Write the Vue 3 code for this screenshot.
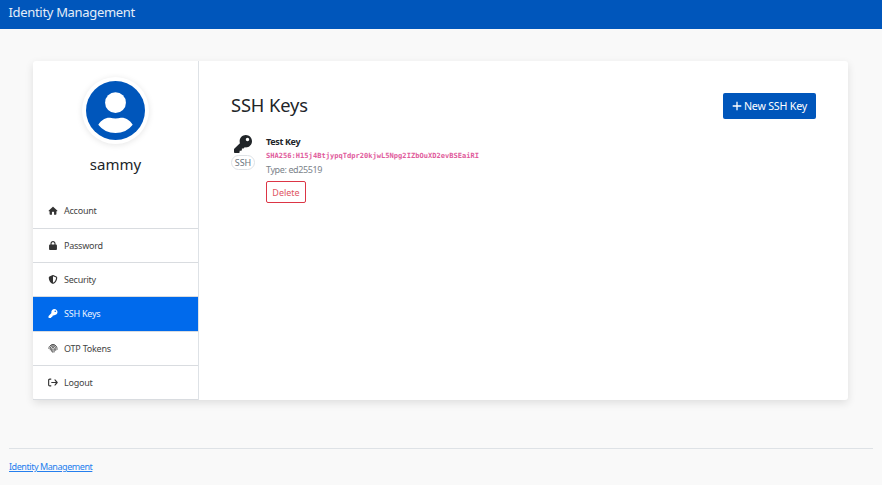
<script setup>
const items = [
  { name: 'Account', icon: 'home' },
  { name: 'Password', icon: 'lock' },
  { name: 'Security', icon: 'shield' },
  { name: 'SSH Keys', icon: 'key', active: true },
  { name: 'OTP Tokens', icon: 'fingerprint' },
  { name: 'Logout', icon: 'logout' },
]
const keyPath = 'M512 176C512 273.200 433.200 352 336 352c-11.220 0-22.190-1.062-32.827-3.069l-24.012 27.014A24 24 0 0 1 261.223 384H224v40c0 13.255-10.745 24-24 24h-40v40c0 13.255-10.745 24-24 24H24c-13.255 0-24-10.745-24-24v-78.059c0-6.365 2.529-12.470 7.029-16.971l161.802-161.802C163.108 213.814 160 195.271 160 176 160 78.800 238.800 0 336 0 433.500 0 512 78.500 512 176zM336 128c0 26.510 21.490 48 48 48s48-21.490 48-48-21.490-48-48-48-48 21.490-48 48z'
const icons = {
  home: 'M280 42c14-13 34-13 48 0l232 208c24 22 9 54-18 54h-30v148c0 33-22 60-56 60H368V368c0-18-14-32-32-32h-64c-18 0-32 14-32 32v144h-88c-34 0-56-27-56-60V304H66c-27 0-42-32-18-54z',
  lock: 'M144 144v48h160v-48c0-44-36-80-80-80s-80 36-80 80zM80 192v-48C80 64 144 0 224 0s144 64 144 144v48h16c35 0 64 29 64 64v192c0 35-29 64-64 64H64c-35 0-64-29-64-64V256c0-35 29-64 64-64z',
  shield: 'M256 0c5 0 9 1 13 3l188 80c22 9 39 31 39 57-1 99-42 281-214 363-17 8-36 8-52 0C58 421 17 239 16 140c0-26 17-48 39-57L243 3c4-2 8-3 13-3zm0 67v378c138-67 175-215 176-304z',
  key: keyPath,
  logout: 'M370 130c-12-12-12-33 0-45s33-12 45 0l128 148c12 13 12 33 0 46L415 427c-12 12-33 12-45 0s-12-33 0-45l73-94H208c-42 0-42-64 0-64h235zM160 96H96c-18 0-32 14-32 32v256c0 18 14 32 32 32h64c42 0 42 64 0 64H96c-53 0-96-43-96-96V128c0-53 43-96 96-96h64c42 0 42 64 0 64z',
}
const boxes = { home: '0 0 608 512', lock: '-32 0 512 512', logout: '0 0 560 512' }
</script>

<template>
  <div class="page">
    <header>Identity Management</header>
    <main>
      <aside>
        <div class="profile">
          <div class="avatar">
            <svg viewBox="0 0 60 60">
              <circle cx="30" cy="30" r="30" />
              <circle class="face" cx="30" cy="22" r="10.600" />
              <path class="face" d="M12.500 44.500C16 39 20 37 24.500 37.300Q30 38.800 35.500 37.300C40 37 44 39 47.500 44.500Q41 53 30 53T12.500 44.500Z" />
            </svg>
          </div>
          <h4>sammy</h4>
        </div>
        <nav>
          <a v-for="item in items" :key="item.name" :class="{ active: item.active }">
            <svg v-if="item.icon === 'fingerprint'" class="print" viewBox="0 0 20 20">
              <path d="M1 11V9C1 0 19-1 19 10v3M4 14V9C4 3 16 3 16 10v5M7 17V10C7 6 13 6 13 10c0 4 0 6-1 9M10 10q0 5-1 9M3 5Q10-3 17 5" />
            </svg>
            <svg v-else :class="item.icon" :viewBox="boxes[item.icon] || '0 0 512 512'"><path :d="icons[item.icon]" /></svg>
            <span>{{ item.name }}</span>
          </a>
        </nav>
      </aside>
      <section>
        <div class="heading">
          <h3>SSH Keys</h3>
          <button class="new">
            <svg viewBox="0 0 10 10"><path d="M5 .7v8.600M.7 5h8.600" /></svg>
            <span>New SSH Key</span>
          </button>
        </div>
        <div class="entry">
          <div class="symbol">
            <svg viewBox="0 0 512 512"><path :d="keyPath" /></svg>
            <span class="badge">SSH</span>
          </div>
          <div class="details">
            <strong>Test Key</strong>
            <code>SHA256:H15j4BtjypqTdpr20kjwL5Npg2IZbOuXD2evBSEaiRI</code>
            <span class="type">Type: ed25519</span>
            <button class="delete">Delete</button>
          </div>
        </div>
      </section>
    </main>
    <footer><a>Identity Management</a></footer>
  </div>
</template>

<style>
body { background: #f9f9f9; }
</style>

<style scoped>
* { box-sizing: border-box; }
.page {
  height: 485px;
  display: flex;
  flex-direction: column;
  overflow: hidden;
  font: 9px/13px "Noto Sans", sans-serif;
  color: #212529;
}
header {
  height: 29px;
  padding: 0 8.500px;
  background: #0056bb;
  color: #e4edf8;
  font-size: 13px;
  letter-spacing: -.32px;
  line-height: 25px;
}
main {
  display: flex;
  height: 339px;
  margin: 32px 34px 0 33px;
  background: #fff;
  border-radius: 3px;
  box-shadow: 0 3px 9px rgba(0, 0, 0, .11);
}
aside { width: 166px; border-right: 1px solid #dee2e6; }
.profile { height: 133px; display: flex; flex-direction: column; align-items: center; padding-top: 16px; }
.avatar { width: 67px; height: 67px; padding: 4px; border-radius: 50%; background: #fff; box-shadow: 0 1px 6px rgba(0, 0, 0, .1); }
.avatar svg { display: block; width: 59px; height: 59px; fill: #0056bb; }
.avatar .face { fill: #fff; }
h3, h4 { margin: 0; font-weight: 400; }
h4 { margin-top: 10px; font-size: 15px; line-height: 20px; }
nav { display: grid; grid-template-rows: 35px 34px 34px 35px 34px 34px; }
nav a { display: flex; align-items: center; padding-left: 15px; border-bottom: 1px solid #d9dce0; color: #444; letter-spacing: -.23px; }
nav a:first-child, nav a.active { padding-bottom: 1px; }
nav a svg { width: 10px; height: 9px; margin-right: 6px; fill: #333; }
nav a.active { background: #006aec content-box; background-clip: padding-box; color: #eaf3ff; }
nav a.active svg { fill: #fff; }
nav .print { fill: none; stroke: #454545; stroke-width: 1.900; }
section { flex: 1; padding: 32px 32px 0; }
.heading { display: flex; justify-content: space-between; height: 26px; }
h3 { font-size: 18.300px; letter-spacing: -.1px; line-height: 24px; }
button { font: inherit; border-radius: 2px; }
.new { display: flex; align-items: center; justify-content: center; gap: 2px; width: 93px; height: 26px; padding: 0; border: 0; background: #0056bb; color: #fff; font-size: 10.700px; letter-spacing: -.2px; }
.new svg { width: 10px; height: 10px; fill: none; stroke: #fff; stroke-width: 1.300; }
.entry { display: flex; gap: 11px; margin-top: 16px; }
.symbol { display: flex; flex-direction: column; align-items: center; width: 24px; }
.symbol svg { width: 18px; height: 18px; fill: #212529; }
.badge { margin-top: 2px; width: 24px; height: 15px; border: 1px solid #dee2e6; border-radius: 8px; color: #6c757d; text-align: center; line-height: 13px; }
.details { display: flex; flex-direction: column; align-items: flex-start; }
strong { line-height: 14px; letter-spacing: -.35px; }
code { font: bold 7.080px/13px "DejaVu Sans Mono", monospace; color: #df5c9c; }
.type { line-height: 15px; color: #7b838a; letter-spacing: -.4px; }
.delete { width: 40px; height: 22px; margin-top: 4px; padding: 0; border: 1px solid #dc3545; background: #fff; color: #e05563; }
footer { margin: 48px 9px 0; border-top: 1px solid #dee2e6; padding-top: 11px; }
footer a { color: #257fee; text-decoration: underline; letter-spacing: -.44px; }
</style>
